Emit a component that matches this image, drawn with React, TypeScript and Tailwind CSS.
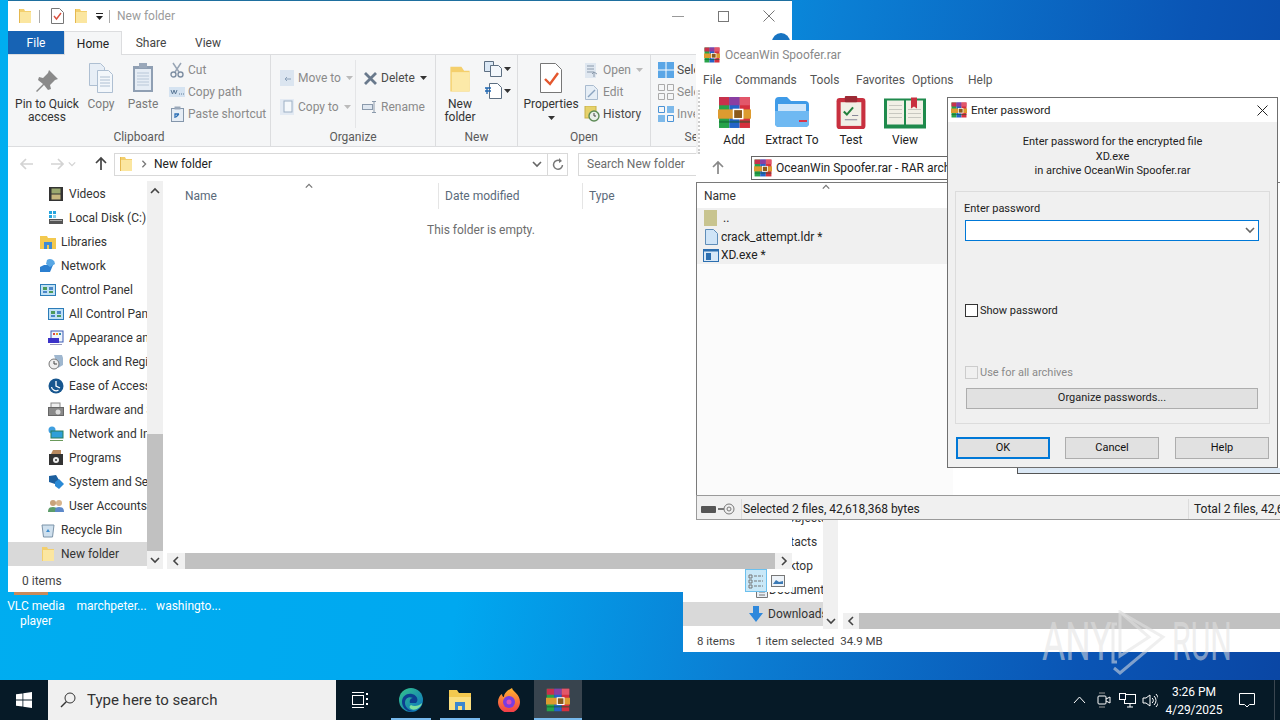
import React from "react";

type P = { s?: number; className?: string };

const Folder = ({ s = 16 }: P) => (
  <svg width={s} height={s} viewBox="0 0 16 16" className="shrink-0">
    <path d="M2 1h5l1 2h6v12H2z" fill="#f3cf6d" />
    <path d="M3 4h11v11H3z" fill="#fbe6a0" />
    <path d="M2 1h1v14H2z" fill="#e5b84f" />
  </svg>
);

const Rar = ({ s = 16 }: P) => (
  <svg width={s} height={s} viewBox="0 0 32 32" className="shrink-0">
    <rect x="1" y="1" width="10" height="30" fill="#27a34a" />
    <rect x="11" y="1" width="10" height="30" fill="#2464c8" />
    <rect x="21" y="1" width="10" height="30" fill="#d5303e" />
    <rect x="1" y="1" width="10" height="8" fill="#c9304c" />
    <rect x="11" y="1" width="10" height="8" fill="#8b3ea2" />
    <rect x="21" y="1" width="10" height="8" fill="#e2576a" />
    <rect x="1" y="24" width="30" height="2" fill="#0b5a2a" opacity=".5" />
    <rect x="0" y="13" width="32" height="9" fill="#dd9b30" />
    <rect x="15" y="13" width="9" height="9" fill="#8b5a1c" stroke="#fff" strokeWidth="1.4" />
  </svg>
);

const Chevron = ({ dir = "down", c = "#555", s = 10 }: { dir?: "down" | "up" | "left" | "right"; c?: string; s?: number }) => {
  const d = { down: "M1 3l4 4 4-4", up: "M1 7l4-4 4 4", left: "M7 1L3 5l4 4", right: "M3 1l4 4-4 4" }[dir];
  return (
    <svg width={s} height={s} viewBox="0 0 10 10" className="shrink-0">
      <path d={d} fill="none" stroke={c} strokeWidth="1.6" />
    </svg>
  );
};

const Drop = ({ c = "#333" }: { c?: string }) => (
  <svg width="7" height="4" viewBox="0 0 7 4" className="shrink-0">
    <path d="M0 0h7L3.500 4z" fill={c} />
  </svg>
);

const Arrow = ({ dir, c }: { dir: "left" | "right" | "up"; c: string }) => {
  const r = dir === "left" ? 0 : dir === "right" ? 180 : 90;
  return (
    <svg width="16" height="16" viewBox="0 0 16 16" className="shrink-0">
      <path transform={`rotate(${r} 8 8)`} d="M2 8h12M7 3L2 8l5 5" fill="none" stroke={c} strokeWidth="1.7" />
    </svg>
  );
};

const NavIcon = ({ kind }: { kind: string }) => {
  const body: Record<string, React.ReactNode> = {
    video: (<><rect x="1" y="1" width="14" height="14" fill="#333" /><rect x="3.500" y="2.500" width="9" height="5" fill="#9aa86f" /><rect x="3.500" y="8.500" width="9" height="5" fill="#c6b77e" /></>),
    disk: (<><rect x="1" y="9" width="14" height="5" fill="#555" /><rect x="2" y="10" width="12" height="1" fill="#aaa" /><rect x="1" y="1" width="3" height="3" fill="#26a6df" /><rect x="5" y="1" width="3" height="3" fill="#26a6df" /><rect x="1" y="5" width="3" height="3" fill="#26a6df" /><rect x="5" y="5" width="3" height="3" fill="#7fd0f0" /></>),
    lib: (<><path d="M0 2h7l1 2h8v11H0z" fill="#f3c94f" /><rect x="4" y="8" width="8" height="7" fill="#3e8ad6" /><rect x="7" y="11" width="2" height="4" fill="#f3c94f" /></>),
    net: (<><path d="M0 9l4-2h9l-3 7H0z" fill="#2b7fd0" /><path d="M7 2a5 5 0 0 1 8 4l-5 3-4-3z" fill="#59a7e4" /></>),
    cp: (<><rect x="0.500" y="2.500" width="15" height="11" fill="#bfe0f5" stroke="#2c7cb8" /><rect x="3" y="5" width="4" height="3" fill="#4c9a5a" /><rect x="9" y="5" width="4" height="3" fill="#4b86c7" /><rect x="3" y="9" width="4" height="2" fill="#4b86c7" /><rect x="9" y="9" width="4" height="2" fill="#4c9a5a" /></>),
    appear: (<><rect x="3" y="1" width="12" height="11" fill="#eef4fb" stroke="#3b5bb5" /><rect x="5" y="3" width="2" height="2" fill="#d44" /><rect x="8" y="3" width="2" height="2" fill="#e8a020" /><rect x="11" y="3" width="2" height="2" fill="#38a" /><rect x="0" y="8" width="11" height="5" fill="#3b32c8" /><rect x="2" y="14" width="12" height="1" fill="#99b" /></>),
    clock: (<><path d="M6 1h8l1 3v7l-5 3z" fill="#9fb7cf" /><circle cx="6" cy="10" r="5" fill="#eee" stroke="#777" /><path d="M6 7v3h3" stroke="#444" fill="none" /></>),
    ease: (<><circle cx="8" cy="8" r="7.500" fill="#17568f" /><path d="M8 3v5l4 2M3.500 9a4.500 4.500 0 0 0 7 3" stroke="#fff" strokeWidth="1.3" fill="none" /></>),
    hw: (<><rect x="3" y="1" width="9" height="5" fill="#eee" stroke="#888" /><rect x="0.500" y="5.500" width="15" height="8" fill="#8a8a8a" stroke="#666" /><circle cx="10" cy="10" r="2.500" fill="#ddd" /></>),
    netint: (<><circle cx="4" cy="4" r="3.500" fill="#3f9fe0" /><rect x="3" y="5" width="12" height="7" fill="#2f9fd8" stroke="#2a7d5a" /><rect x="2" y="14" width="13" height="1" fill="#6a9a5a" /></>),
    prog: (<><rect x="1" y="4" width="14" height="11" fill="#333" /><path d="M5 0h8v4H3z" fill="#b88a60" /><circle cx="8" cy="10" r="3" fill="#eee" /><circle cx="8" cy="10" r="1" fill="#333" /></>),
    sys: (<><path d="M1 2l7-1 3 5-4 4-6-2z" fill="#1c5f9e" /><path d="M7 8l4-3 5 5-5 5-4-3z" fill="#2a8ad6" /></>),
    user: (<><circle cx="5" cy="5" r="3" fill="#c9a27a" /><circle cx="11" cy="5" r="3" fill="#d8b48c" /><path d="M0 14c0-4 2-5 5-5s4 1 4 5z" fill="#5c9c6a" /><path d="M7 14c0-4 1-5 4-5s5 1 5 5z" fill="#5c88c9" /></>),
    bin: (<><path d="M2 3h12l-1.500 12H3.500z" fill="#cfe0ee" stroke="#7b93a8" /><path d="M6 10l2-3 2 3z" fill="#3f8ed0" /></>),
    folder: (<><path d="M2 1h5l1 2h6v12H2z" fill="#f3cf6d" /><path d="M3 4h11v11H3z" fill="#fbe6a0" /></>),
  };
  return (
    <svg width="16" height="16" viewBox="0 0 16 16" className="shrink-0">
      {body[kind]}
    </svg>
  );
};

const NavRow = ({ icon, label, indent, sel }: { icon: string; label: string; indent: number; sel?: boolean }) => (
  <div className={`h-6 flex items-center overflow-hidden whitespace-nowrap ${indent === 2 ? "pl-10" : "pl-8"} ${sel ? "bg-[#d9d9d9]" : ""}`}>
    <NavIcon kind={icon} />
    <span className="ml-[5px]">{label}</span>
  </div>
);

const SmallItem = ({ icon, label, gray, arrow }: { icon: React.ReactNode; label: string; gray?: boolean; arrow?: boolean }) => (
  <div className={`h-[22px] flex items-center gap-[2px] whitespace-nowrap ${gray ? "text-[#8a8a8a]" : "text-[#4a4a4a]"}`}>
    <span className="w-[16px] h-[16px] flex items-center justify-center shrink-0">{icon}</span>
    <span className="ml-[1px]">{label}</span>
    {arrow ? <span className="ml-[3px]"><Drop c={gray ? "#bbb" : "#333"} /></span> : null}
  </div>
);

const Big = ({ w, icon, lines, gray }: { w: number; icon: React.ReactNode; lines: string[]; gray?: boolean }) => (
  <div className={`flex flex-col items-center shrink-0 ${gray ? "text-[#7a7a7a]" : "text-[#333]"}`} style={{ width: w }}>
    <div className="h-[33px] flex items-end justify-center">{icon}</div>
    <div className="mt-[5px] leading-[13px] text-center whitespace-nowrap">
      {lines.map((l) => (<div key={l}>{l}</div>))}
    </div>
  </div>
);

const Group = ({ w, label, children, sep = true }: { w: number; label: string; children: React.ReactNode; sep?: boolean }) => (
  <div className={`h-full flex flex-col shrink-0 ${sep ? "border-r border-[#dcdddf]" : ""}`} style={{ width: w }}>
    <div className="flex-1 flex pt-[5px] min-h-0">{children}</div>
    <div className="h-[15px] pb-[2px] leading-[13px] text-center text-[#5a5a5a]">{label}</div>
  </div>
);

const Doc = ({ c = "#b9cde0", f = "#e9f0f7" }: { c?: string; f?: string }) => (
  <svg width="14" height="16" viewBox="0 0 14 16">
    <path d="M1.500 .5h7l4 4v11h-11z" fill={f} stroke={c} />
    <path d="M4 7h6M4 10h6M4 13h6" stroke={c} />
  </svg>
);

const Explorer = () => (
  <div className="absolute left-2 top-0 w-[784px] h-[592px] bg-white border-t border-[#1e6f9f] flex flex-col text-[#333]">
    {/* title */}
    <div className="h-[30px] shrink-0 flex items-center pl-[9px] relative">
      <Folder s={16} />
      <div className="w-px h-[13px] bg-[#aaa] ml-[6px]" />
      <span className="ml-[9px] w-[16px] h-[16px] flex items-center justify-center">
        <svg width="13" height="16" viewBox="0 0 13 16"><path d="M.5.5h8l4 4v11H.5z" fill="#fff" stroke="#777" /><path d="M3 8l2.500 3L10 5" stroke="#d9503f" strokeWidth="1.400" fill="none" /></svg>
      </span>
      <span className="ml-[8px]"><Folder s={16} /></span>
      <span className="ml-[6px] flex flex-col items-center gap-[2px] w-[8px]"><span className="w-[7px] h-px bg-[#222]" /><Drop c="#222" /></span>
      <div className="w-px h-[13px] bg-[#aaa] ml-[6px]" />
      <span className="ml-[7px] text-[#9b9b9b]">New folder</span>
      <div className="ml-auto flex items-center pr-[17px]">
        <span className="w-[12px] h-px bg-[#999]" />
        <span className="ml-[34px] w-[11px] h-[11px] border border-[#777]" />
        <svg className="ml-[34px]" width="12" height="12" viewBox="0 0 12 12"><path d="M.5.5l11 11M11.500.5l-11 11" stroke="#777" /></svg>
      </div>
    </div>
    {/* tabs */}
    <div className="h-[24px] shrink-0 flex items-stretch border-b border-[#dcdddf]">
      <div className="w-[56px] bg-[#1763b4] text-white flex items-center justify-center">File</div>
      <div className="w-[58px] bg-[#f5f6f7] border-x border-t border-[#dcdddf] -mb-px flex items-center justify-center text-[#222]">Home</div>
      <div className="w-[58px] flex items-center justify-center text-[#444]">Share</div>
      <div className="w-[56px] flex items-center justify-center text-[#444]">View</div>
    </div>
    {/* ribbon */}
    <div className="h-[92px] shrink-0 bg-[#f5f6f7] border-b border-[#dcdddf] flex overflow-hidden">
      <Group w={263} label="Clipboard">
        <div className="flex pl-[8px]">
          <Big w={62} lines={["Pin to Quick", "access"]} icon={<svg width="24" height="24" viewBox="0 0 24 24"><path d="M14 1l9 9-3 1-5 5 1 4-3 1-4-5-7 7-1-1 7-7-5-4 1-3 4 1 5-5z" fill="#8a8a8a" /></svg>} />
          <Big w={46} gray lines={["Copy"]} icon={<svg width="26" height="30" viewBox="0 0 26 30"><path d="M1.500.5h11l4 4v18h-15z" fill="#e7eef6" stroke="#aebfd2" /><path d="M9.500 7.500h11l4 4v18h-15z" fill="#f3f7fb" stroke="#aebfd2" /><path d="M12 14h10M12 17h10M12 20h10M12 23h10" stroke="#aebfd2" /></svg>} />
          <Big w={38} gray lines={["Paste"]} icon={<svg width="22" height="31" viewBox="0 0 22 31"><rect x="1" y="4" width="20" height="26" fill="#8f9fb3" /><rect x="3" y="7" width="16" height="21" fill="#e6edf5" /><path d="M5 11h12M5 14h12M5 17h12M5 20h12M5 23h12" stroke="#b8c7d8" /><rect x="7" y="1" width="8" height="5" fill="#9aa8ba" /></svg>} />
        </div>
        <div className="flex flex-col ml-[7px] -mt-[1px]">
          <SmallItem gray label="Cut" icon={<svg width="14" height="16" viewBox="0 0 14 16"><path d="M3 1l6 9M11 1L5 10" stroke="#98a5b5" strokeWidth="1.500" /><circle cx="3.500" cy="12.500" r="2.500" fill="none" stroke="#7e8fa3" strokeWidth="1.400" /><circle cx="10.500" cy="12.500" r="2.500" fill="none" stroke="#7e8fa3" strokeWidth="1.400" /></svg>} />
          <SmallItem gray label="Copy path" icon={<svg width="16" height="10" viewBox="0 0 16 10"><rect width="16" height="10" fill="#d5e3f1" /><path d="M2 3l1.500 4L5 3l1.500 4L8 3" stroke="#5d7a98" fill="none" /><path d="M10 7h5" stroke="#5d7a98" strokeDasharray="1 1" /></svg>} />
          <SmallItem gray label="Paste shortcut" icon={<svg width="13" height="16" viewBox="0 0 13 16"><rect x=".5" y="2.500" width="12" height="13" fill="#e6edf5" stroke="#8496ab" /><rect x="3.500" y=".5" width="6" height="3" fill="#9aa8ba" /><path d="M4 12V8h4M8 8L5 11" stroke="#2c6fb5" strokeWidth="1.300" fill="none" /></svg>} />
        </div>
      </Group>
      <Group w={165} label="Organize">
        <div className="flex flex-col w-[85px] pl-[8px] pt-[7px] gap-[7px] border-r border-[#e4e5e7] mb-[3px]">
          <SmallItem gray arrow label="Move to" icon={<svg width="14" height="16" viewBox="0 0 14 16"><rect width="14" height="16" fill="#dbe5f0" /><path d="M11 9H5M7 7L5 9l2 2" stroke="#8aa0b8" fill="none" /></svg>} />
          <SmallItem gray arrow label="Copy to" icon={<svg width="14" height="16" viewBox="0 0 14 16"><rect width="14" height="16" fill="#e3eaf3" /><rect x="4" y="2" width="8" height="11" fill="#f5f8fb" stroke="#9db0c5" /></svg>} />
        </div>
        <div className="flex flex-col pl-[6px] pt-[7px] gap-[7px]">
          <SmallItem label="Delete" icon={<svg width="13" height="13" viewBox="0 0 13 13"><path d="M1 1l11 11M12 1L1 12" stroke="#69798c" strokeWidth="2.800" /></svg>} arrow />
          <SmallItem gray label="Rename" icon={<svg width="16" height="12" viewBox="0 0 16 12"><rect x=".5" y="3.500" width="10" height="5" fill="#dfe7f0" stroke="#8b9aac" /><path d="M12 0v12M10 .5h4M10 11.500h4" stroke="#8b9aac" /></svg>} />
        </div>
      </Group>
      <Group w={82} label="New">
        <div className="pl-[3px]">
          <Big w={42} lines={["New", "folder"]} icon={<svg width="22" height="28" viewBox="0 0 16 20"><path d="M1 1h8l2 3h4v15H1z" fill="#f4cf6c" /><path d="M2 5h13v14H2z" fill="#fce9a8" /></svg>} />
        </div>
        <div className="flex flex-col gap-[6px] ml-[3px] pt-[1px]">
          <div className="flex items-center gap-[2px]">
            <svg width="18" height="16" viewBox="0 0 18 16"><path d="M.5.5h9v10h-9z" fill="#dbe8f5" stroke="#5d6f82" /><path d="M6.500 4.500h8l3 3v8h-11z" fill="#f3f7fb" stroke="#5d6f82" /></svg>
            <Drop />
          </div>
          <div className="flex items-center gap-[2px]">
            <svg width="18" height="16" viewBox="0 0 18 16"><path d="M5.500.5h8l4 4v11h-12z" fill="#fff" stroke="#5d6f82" /><path d="M1 5h6M1 8h6M3 5v6" stroke="#1e66b0" strokeWidth="1.300" /></svg>
            <Drop />
          </div>
        </div>
      </Group>
      <Group w={133} label="Open">
        <div className="flex flex-col items-center w-[64px] text-[#333] ml-[1px]">
          <div className="h-[33px] flex items-end">
            <svg width="22" height="30" viewBox="0 0 22 30"><path d="M.5.5h15l6 6v23H.5z" fill="#fff" stroke="#777" /><path d="M5 16l5 5 8-11" fill="none" stroke="#e4572e" strokeWidth="2.400" /></svg>
          </div>
          <div className="mt-[5px] leading-[13px]">Properties</div>
          <div className="mt-[5px]"><Drop /></div>
        </div>
        <div className="flex flex-col ml-[1px] -mt-[1px]">
          <SmallItem gray arrow label="Open" icon={<svg width="14" height="15" viewBox="0 0 14 15"><rect width="11" height="15" fill="#dfe7f0" /><path d="M2 3h7M2 6h7M2 9h7" stroke="#8b9aac" /><path d="M9 14V9l-2 2M9 9l3 2" stroke="#8b9aac" fill="none" /></svg>} />
          <SmallItem gray label="Edit" icon={<svg width="14" height="15" viewBox="0 0 14 15"><path d="M.5.5h8l4 4v10H.5z" fill="#e6eef6" stroke="#a9bbcf" /><path d="M3 12L10 5" stroke="#8ba4c0" strokeWidth="1.500" /></svg>} />
          <SmallItem label="History" icon={<svg width="16" height="16" viewBox="0 0 16 16"><rect x="1" width="11" height="12" fill="#e6d26a" stroke="#c8b04a" /><circle cx="10" cy="10" r="5" fill="#e9efe9" stroke="#5c8a55" strokeWidth="1.400" /><path d="M10 7v3h2" stroke="#444" fill="none" /></svg>} />
        </div>
      </Group>
      <Group w={100} label="Select" sep={false}>
        <div className="flex flex-col pl-[7px] -mt-[1px] w-[44px] overflow-hidden">
          <SmallItem label="Select all" icon={<svg width="16" height="16" viewBox="0 0 16 16"><rect width="16" height="16" fill="#5aa6e6" /><path d="M8 0v16M0 8h16" stroke="#fff" /></svg>} />
          <SmallItem gray label="Select none" icon={<svg width="16" height="16" viewBox="0 0 16 16"><path d="M.5.5h6v6h-6zM9.500.5h6v6h-6zM.5 9.500h6v6h-6zM9.500 9.500h6v6h-6z" fill="none" stroke="#aaa" /></svg>} />
          <SmallItem gray label="Invert selection" icon={<svg width="16" height="16" viewBox="0 0 16 16"><path d="M.5.5h6v6h-6z" fill="none" stroke="#4a93d6" /><path d="M9 0h7v7H9zM0 9h7v7H0z" fill="#7db9ea" /><path d="M9.500 9.500h6v6h-6z" fill="none" stroke="#4a93d6" /></svg>} />
        </div>
      </Group>
    </div>
    {/* address */}
    <div className="h-[34px] shrink-0 flex items-center">
      <span className="ml-[11px]"><Arrow dir="left" c="#d3d3d3" /></span>
      <span className="ml-[14px]"><Arrow dir="right" c="#d3d3d3" /></span>
      <span className="ml-[3px]"><Chevron c="#d3d3d3" s={8} /></span>
      <span className="ml-[17px]"><Arrow dir="up" c="#444" /></span>
      <div className="ml-[5px] w-[454px] h-[23px] border border-[#d9d9d9] flex items-center">
        <span className="ml-[3px]"><Folder s={16} /></span>
        <span className="ml-[6px]"><Chevron dir="right" c="#777" s={8} /></span>
        <span className="ml-[6px] text-[#222]">New folder</span>
        <span className="ml-auto w-[20px] h-full flex items-center justify-center"><Chevron c="#666" /></span>
        <span className="w-[20px] h-full border-l border-[#d9d9d9] flex items-center justify-center">
          <svg width="12" height="13" viewBox="0 0 12 13"><path d="M10.500 7a4.500 4.500 0 1 1-2-4" fill="none" stroke="#777" strokeWidth="1.500" /><path d="M7 0l3 3-3 2z" fill="#777" /></svg>
        </span>
      </div>
      <div className="ml-[10px] flex-1 h-[23px] border border-[#d9d9d9] flex items-center pl-[8px] text-[#6d6d6d]">Search New folder</div>
    </div>
    {/* body */}
    <div className="flex-1 min-h-0 flex">
      <div className="w-[139px] pt-[1px] shrink-0 flex flex-col">
        <NavRow indent={2} icon="video" label="Videos" />
        <NavRow indent={2} icon="disk" label="Local Disk (C:)" />
        <NavRow indent={1} icon="lib" label="Libraries" />
        <NavRow indent={1} icon="net" label="Network" />
        <NavRow indent={1} icon="cp" label="Control Panel" />
        <NavRow indent={2} icon="cp" label="All Control Panel Items" />
        <NavRow indent={2} icon="appear" label="Appearance and Personalization" />
        <NavRow indent={2} icon="clock" label="Clock and Region" />
        <NavRow indent={2} icon="ease" label="Ease of Access" />
        <NavRow indent={2} icon="hw" label="Hardware and Sound" />
        <NavRow indent={2} icon="netint" label="Network and Internet" />
        <NavRow indent={2} icon="prog" label="Programs" />
        <NavRow indent={2} icon="sys" label="System and Security" />
        <NavRow indent={2} icon="user" label="User Accounts" />
        <NavRow indent={1} icon="bin" label="Recycle Bin" />
        <NavRow indent={1} icon="folder" label="New folder" sel />
      </div>
      <div className="w-[16px] shrink-0 bg-[#f0f0f0] flex flex-col items-center">
        <div className="h-[20px] flex items-center justify-center"><Chevron dir="up" c="#444" /></div>
        <div className="flex-1" />
        <div className="w-full h-[117px] bg-[#c1c1c1]" />
        <div className="h-[18px] flex items-center justify-center"><Chevron c="#444" /></div>
      </div>
      <div className="flex-1 min-w-0 flex flex-col relative">
        <div className="h-[28px] shrink-0 flex items-end text-[#5a6a7a]">
          <div className="w-[276px] h-[26px] pl-[22px] border-r border-[#e5e5e5] flex items-center relative">Name
            <span className="absolute left-[142px] -top-[1px]"><Chevron dir="up" c="#777" s={8} /></span>
          </div>
          <div className="w-[144px] h-[26px] pl-[6px] border-r border-[#e5e5e5] flex items-center">Date modified</div>
          <div className="pl-[6px] h-[26px] flex items-center">Type</div>
        </div>
        <div className="pt-[13px] pl-[264px] text-[#6d6d6d]">This folder is empty.</div>
        <div className="mt-auto h-[16px] ml-[4px] bg-[#f0f0f0] flex items-center">
          <div className="w-[18px] h-full flex items-center justify-center"><Chevron dir="left" c="#444" /></div>
          <div className="flex-1 h-full bg-[#c1c1c1]" />
          <div className="w-[17px] h-full flex items-center justify-center"><Chevron dir="right" c="#444" /></div>
        </div>
      </div>
    </div>
    {/* status */}
    <div className="h-[23px] shrink-0 flex items-center pl-[14px] text-[#444]">
      0 items
      <div className="ml-auto flex items-center pr-[7px] gap-[2px]">
        <div className="w-[22px] h-[23px] bg-[#c9e8f8] border border-[#6cc0ee] flex items-center justify-center">
          <svg width="16" height="16" viewBox="0 0 16 16"><path d="M1 2h3v3H1zM1 7h3v3H1zM1 12h3v3H1z" fill="none" stroke="#777" /><path d="M6 3h9M6 8h9M6 13h9" stroke="#777" strokeDasharray="3 1" /></svg>
        </div>
        <svg className="ml-[2px]" width="14" height="12" viewBox="0 0 14 12"><rect x=".5" y=".5" width="13" height="11" fill="#eef3f8" stroke="#777" /><path d="M2 9l3-4 3 2 4-1v3H2z" fill="#3c7ab5" /></svg>
      </div>
    </div>
  </div>
);

const ExplorerBack = () => (
  <div className="absolute left-[683px] top-[40px] right-0 h-[612px] bg-white flex flex-col justify-end text-[#333]">
    <div className="flex">
      <div className="w-[140px] flex flex-col">
        {["3D Objects", "Contacts", "Desktop", "Documents"].map((l) => (
          <div key={l} className="h-6 flex items-center pl-[72px] whitespace-nowrap overflow-hidden">
            <span className="w-[14px] shrink-0 flex">{l === "Documents" ? <Doc c="#777" /> : null}</span>
            <span>{l}</span>
          </div>
        ))}
        <div className="h-6 bg-[#d9d9d9] flex items-center pl-[65px] whitespace-nowrap overflow-hidden">
          <svg width="16" height="16" viewBox="0 0 16 16" className="shrink-0"><path d="M5 0h6v7h4l-7 9-7-9h4z" fill="#2e88dc" /></svg>
          <span className="ml-[4px]">Downloads</span>
        </div>
        <div className="h-[3px]" />
      </div>
      <div className="w-[15px] bg-[#f0f0f0] flex flex-col justify-end items-center pb-[3px]"><Chevron c="#444" /></div>
      <div className="flex-1 flex flex-col justify-end pl-[5px]">
        <div className="h-[16px] bg-[#f0f0f0] flex items-center">
          <div className="w-[16px] flex justify-center"><Chevron dir="left" c="#444" /></div>
          <div className="flex-1 h-full bg-[#c1c1c1]" />
        </div>
      </div>
    </div>
    <div className="h-[23px] pt-[1px] flex items-center pl-[14px] text-[#444] text-[11.5px]">
      <span>8 items</span>
      <span className="ml-[21px]">1 item selected</span>
      <span className="ml-[6px]">34.9 MB</span>
    </div>
  </div>
);

const ToolBtn = ({ w, label, icon }: { w: number; label: string; icon: React.ReactNode }) => (
  <div className="flex flex-col items-center shrink-0 text-[#222]" style={{ width: w }}>
    <div className="h-[36px] flex items-end justify-center">{icon}</div>
    <div className="mt-[3px] leading-[16px] whitespace-nowrap">{label}</div>
  </div>
);

const WinRar = () => (
  <div className="absolute left-[696px] top-[40px] right-0 h-[480px] bg-[#f0f0f0] flex flex-col text-[#222]">
    <div className="h-[30px] shrink-0 bg-white flex items-center pl-[8px] text-[#888]">
      <Rar s={16} />
      <span className="ml-[5px]">OceanWin Spoofer.rar</span>
    </div>
    <div className="h-[20px] shrink-0 bg-white flex items-center pl-[7px] text-[#555]">
      <span className="w-[32px]">File</span>
      <span className="w-[75px]">Commands</span>
      <span className="w-[46px]">Tools</span>
      <span className="w-[56px]">Favorites</span>
      <span className="w-[56px]">Options</span>
      <span>Help</span>
    </div>
    <div className="h-[64px] shrink-0 bg-white border-l-2 border-dotted border-[#ccc] ml-[2px] flex pl-[16px] pt-[3px]">
      <ToolBtn w={36} label="Add" icon={<Rar s={33} />} />
      <ToolBtn w={80} label="Extract To" icon={<svg width="38" height="34" viewBox="0 0 38 34"><path d="M2 6a4 4 0 0 1 4-4h8l4 4h14a4 4 0 0 1 4 4v18a4 4 0 0 1-4 4H6a4 4 0 0 1-4-4z" fill="#3f9be8" /><path d="M5 9h28v8H5z" fill="#cfe6fa" /><path d="M2 16h34v12a4 4 0 0 1-4 4H6a4 4 0 0 1-4-4z" fill="#6fb9f2" /><rect x="26" y="25" width="8" height="2" fill="#d8354b" /></svg>} />
      <ToolBtn w={38} label="Test" icon={<svg width="30" height="33" viewBox="0 0 28 32"><rect x="0" y="2" width="28" height="30" rx="3" fill="#c8303f" /><rect x="4" y="6" width="20" height="23" fill="#f1efe6" /><rect x="8" y="0" width="12" height="6" rx="1" fill="#9c2a35" /><path d="M7 15l3 3 6-7" stroke="#23803e" strokeWidth="2" fill="none" /><path d="M8 23h12M15 19h6" stroke="#889" /></svg>} />
      <ToolBtn w={70} label="View" icon={<svg width="42" height="32" viewBox="0 0 42 31"><path d="M0 1h42v30H0z" fill="#1f8a4c" /><path d="M3 3h17v24H3zM22 3h17v24H22z" fill="#f2f0e6" /><path d="M5 8h13M5 12h13M5 16h13M5 20h13M24 12h13M24 16h13M24 20h13" stroke="#c8c8c0" /><path d="M27 0h6v11l-3-2-3 2z" fill="#c8303f" /></svg>} />
    </div>
    <div className="h-[28px] shrink-0 bg-white flex items-center pl-[14px] relative">
      <Arrow dir="up" c="#888" />
      <div className="ml-[25px] w-[196px] h-[24px] border border-r-0 border-[#666] flex items-center pl-[2px] text-[#222] whitespace-nowrap overflow-hidden">
        <Rar s={18} />
        <span className="ml-[4px]">OceanWin Spoofer.rar - RAR archive</span>
      </div>
    </div>
    <div className="flex-1 min-h-0 bg-white border-t border-l border-[#7a7a7a] flex flex-col relative">
      <div className="h-[25px] shrink-0 pl-[7px] pt-[5px] text-[#333] relative">Name
        <span className="absolute left-[125px] top-0"><Chevron dir="up" c="#777" s={8} /></span>
      </div>
      <div className="w-[256px] flex-1 bg-[#fbfbfb]">
        <div className="bg-[#f0f0f0] h-[56px]">
          <div className="h-[19px] flex items-center pl-[7px]"><svg width="13" height="16" viewBox="0 0 13 16"><rect width="13" height="16" fill="#c8c48f" /></svg><span className="ml-[6px]">..</span></div>
          <div className="h-[19px] flex items-center pl-[8px]"><svg width="13" height="16" viewBox="0 0 13 16"><path d="M.5.5h8l4 4v11H.5z" fill="#cfe4f7" stroke="#5f8db8" /></svg><span className="ml-[3px]">crack_attempt.ldr *</span></div>
          <div className="h-[18px] flex items-center pl-[6px]"><svg width="16" height="13" viewBox="0 0 16 13"><rect x=".5" y=".5" width="15" height="12" fill="#d8e8f7" stroke="#2c6fb0" /><rect x=".5" y=".5" width="15" height="2" fill="#2c6fb0" /><rect x="3" y="4" width="5" height="7" fill="#2c6fb0" /></svg><span className="ml-[2px]">XD.exe *</span></div>
        </div>
      </div>
      <div className="absolute left-[320px] right-0 bottom-[21px] h-[6px] bg-[#dbe8f5] border-b border-l border-[#555]" />
    </div>
    <div className="h-[25px] pt-[3px] shrink-0 border-t border-l border-b border-[#9a9a9a] flex items-center text-[#222]">
      <div className="w-[45px] shrink-0 h-full flex items-center pl-[4px] gap-[2px] border-r border-[#dcdcdc]">
        <span className="w-[15px] h-[7px] bg-[#555] rounded-[1px]" />
        <svg width="17" height="12" viewBox="0 0 17 12"><circle cx="11" cy="6" r="5" fill="#eee" stroke="#777" /><circle cx="11" cy="6" r="2" fill="none" stroke="#777" /><path d="M0 6h6" stroke="#777" strokeWidth="2" /></svg>
      </div>
      <span className="pl-[1px] w-[446px] shrink-0">Selected 2 files, 42,618,368 bytes</span>
      <span className="pl-[5px] h-full flex items-center border-l border-[#dcdcdc] whitespace-nowrap">Total 2 files, 42,618,368 bytes</span>
    </div>
  </div>
);

const WinBtn = ({ label, w, primary }: { label: string; w: number; primary?: boolean }) => (
  <div className={`h-[22px] shrink-0 bg-[#e1e1e1] flex items-center justify-center text-[#111] ${primary ? "border-2 border-[#0078d7]" : "border border-[#adadad]"}`} style={{ width: w }}>
    {label}
  </div>
);

const Check = ({ label, disabled }: { label: string; disabled?: boolean }) => (
  <div className={`flex items-center ml-[9px] gap-[2px] ${disabled ? "text-[#8a8a8a]" : "text-[#222]"}`}>
    <span className={`w-[13px] h-[13px] border ${disabled ? "border-[#ccc]" : "border-[#333] bg-white"}`} />
    <span>{label}</span>
  </div>
);

const Dialog = () => (
  <div className="absolute left-[947px] top-[97px] w-[331px] h-[371px] bg-[#f0f0f0] border border-[#6f6f6f] flex flex-col text-[#222] text-[11px]">
    <div className="h-[24px] shrink-0 bg-white flex items-center pl-[3px] pr-[9px] text-[11.5px]">
      <Rar s={16} />
      <span className="ml-[4px]">Enter password</span>
      <svg className="ml-auto" width="11" height="11" viewBox="0 0 11 11"><path d="M.5.5l10 10M10.500.5l-10 10" stroke="#222" /></svg>
    </div>
    <div className="pt-[13px] text-center leading-[14.500px]">
      <div>Enter password for the encrypted file</div>
      <div>XD.exe</div>
      <div>in archive OceanWin Spoofer.rar</div>
    </div>
    <div className="mt-[12px] mx-[7px] w-[315px] h-[233px] border border-[#dcdcdc] flex flex-col">
      <div className="mt-[9px] ml-[8px] leading-[16px]">Enter password</div>
      <div className="mt-[3px] ml-[9px] w-[294px] h-[21px] bg-white border border-[#0078d7] flex items-center justify-end pr-[3px]"><Chevron c="#666" /></div>
      <div className="mt-[62px]"><Check label="Show password" /></div>
      <div className="mt-[46px]"><Check label="Use for all archives" disabled /></div>
      <div className="mt-[7px] ml-[10px] h-[21px] w-[292px] bg-[#e1e1e1] border border-[#adadad] flex items-center justify-center">Organize passwords...</div>
    </div>
    <div className="mt-[13px] flex pl-[8px]">
      <WinBtn label="OK" w={94} primary />
      <div className="w-[15px]" />
      <WinBtn label="Cancel" w={94} />
      <div className="w-[16px]" />
      <WinBtn label="Help" w={94} />
    </div>
  </div>
);

const Tray = () => (
  <div className="ml-auto flex items-center h-full text-white">
    <svg width="13" height="8" viewBox="0 0 13 8"><path d="M1 7l5.500-6L12 7" fill="none" stroke="#fff" /></svg>
    <svg className="ml-[11px]" width="14" height="16" viewBox="0 0 14 16"><rect x="1" y="4" width="8" height="8" rx="1" fill="none" stroke="#fff" /><path d="M9 7l4-2v6l-4-2" fill="none" stroke="#fff" /><path d="M2 1h6M2 15h6" stroke="#999" /></svg>
    <svg className="ml-[8px]" width="17" height="15" viewBox="0 0 17 15"><rect x="5.500" y="1.500" width="11" height="9" fill="none" stroke="#fff" /><rect x=".5" y=".5" width="6" height="6" fill="#05172a" stroke="#fff" /><path d="M11 11v3M8 14h6" stroke="#fff" /></svg>
    <svg className="ml-[6px]" width="16" height="15" viewBox="0 0 16 15"><path d="M1 5h3l4-3v11L4 10H1z" fill="none" stroke="#fff" /><path d="M10 5a3 3 0 0 1 0 5M12 3a6 6 0 0 1 0 9M14 1a9 9 0 0 1 0 13" fill="none" stroke="#fff" /></svg>
    <div className="w-[60px] ml-[6px] pt-[2px] text-center leading-[18px] text-[12px]">
      <div>3:26 PM</div>
      <div>4/29/2025</div>
    </div>
    <svg className="ml-[15px]" width="16" height="15" viewBox="0 0 16 15"><path d="M.5.5h15v11h-5L8 14l-2.500-2.500h-5z" fill="none" stroke="#fff" /></svg>
    <div className="w-[20px] h-full border-r border-[#3a4650]" />
    <div className="w-[5px]" />
  </div>
);

const Taskbar = () => (
  <div className="absolute left-0 right-0 bottom-0 h-[40px] bg-[#061a27] flex items-stretch">
    <div className="w-[48px] flex items-center justify-center">
      <svg width="16" height="16" viewBox="0 0 16 16"><path d="M0 2.300l6.500-.9v6.200H0zM7.300 1.300L16 0v7.600H7.300zM0 8.400h6.500v6.200L0 13.700zM7.300 8.400H16V16l-8.700-1.200z" fill="#fff" /></svg>
    </div>
    <div className="w-[288px] bg-[#f0f0f0] flex items-center pl-[12px] text-[#333] text-[15px]">
      <svg width="16" height="16" viewBox="0 0 16 16"><circle cx="10" cy="6" r="5" fill="none" stroke="#333" /><path d="M6.500 9.500L1 15" stroke="#333" strokeWidth="1.500" /></svg>
      <span className="ml-[11px]">Type here to search</span>
    </div>
    <div className="w-[48px] flex items-center justify-center">
      <svg width="16" height="16" viewBox="0 0 16 16"><path d="M0 .5h12M0 15.500h12" stroke="#fff" /><rect x=".5" y="3.500" width="11" height="9" fill="none" stroke="#fff" /><path d="M14 1h2v2h-2zM14 6h2v2h-2zM14 11h2v2h-2z" fill="#fff" /></svg>
    </div>
    <div className="w-[49px] ml-[2px] relative flex items-center justify-center">
      <svg width="24" height="24" viewBox="0 0 24 24"><defs><linearGradient id="e1" x1="0" y1="0" x2="1" y2="1"><stop offset="0" stopColor="#35c58a" /><stop offset="1" stopColor="#0a6fc2" /></linearGradient></defs><circle cx="12" cy="12" r="12" fill="url(#e1)" /><path d="M3 14C3 8 8 5 13 6s7 6 4 9h-6c-1-3 1-5 3-5C10 8 6 10 6 15c0 4 4 8 9 8-6 2-12-3-12-9z" fill="#0d3f8f" /><path d="M12 17c3 2 8 1 11-2-1 5-7 8-11 6-2-1-2-3 0-4z" fill="#7ee0a0" /></svg>
      <span className="absolute bottom-0 left-[5px] right-[4px] h-[2px] bg-[#76b9ed]" />
    </div>
    <div className="w-[49px] relative flex items-center justify-center">
      <svg width="24" height="22" viewBox="0 0 24 22"><path d="M1 1h8l2 3h12v17H1z" fill="#f3c94f" /><rect x="1" y="8" width="22" height="13" fill="#fbdf80" /><path d="M7 13h10v8h-3v-4h-4v4H7z" fill="#3b86cf" /></svg>
      <span className="absolute bottom-0 left-[5px] right-[4px] h-[2px] bg-[#76b9ed]" />
    </div>
    <div className="w-[50px] flex items-center justify-center">
      <svg width="24" height="24" viewBox="0 0 24 24"><defs><linearGradient id="f1" x1="0" y1="0" x2="0" y2="1"><stop offset="0" stopColor="#ffb52e" /><stop offset="1" stopColor="#f2384a" /></linearGradient></defs><path d="M15 0c1 4 8 6 8 14a11 11 0 1 1-22 0c0-4 2-7 4-8 0 2 1 3 2 3 0-4 4-7 8-9z" fill="url(#f1)" /><circle cx="12" cy="14" r="6" fill="#7a3ce0" /><circle cx="12" cy="14" r="2.500" fill="#e04fb0" /></svg>
    </div>
    <div className="w-[48px] bg-[#38444e] relative flex items-center justify-center">
      <Rar s={24} />
      <span className="absolute bottom-0 left-0 right-0 h-[2px] bg-[#76b9ed]" />
    </div>
    <Tray />
  </div>
);

export default function App() {
  return (
    <div className="relative w-[1280px] h-[720px] overflow-hidden text-[12px] leading-[16px] font-['Roboto','Noto_Sans',sans-serif] bg-[linear-gradient(100deg,#00aef0_0%,#00a8f0_40%,#0b7fd4_60%,#0a55b5_85%,#0a46a4_100%)]">
      <div className="absolute left-[14px] top-[592px] w-[34px] h-[3px] bg-[#c98a5a]" />
      <div className="absolute left-0 top-[599px] flex text-white leading-[15px] text-center">
        <div className="w-[72px]">VLC media<br />player</div>
        <div className="w-[79px]">marchpeter...</div>
        <div className="w-[75px]">washingto...</div>
      </div>
      <ExplorerBack />
      <Explorer />
      <span className="absolute left-[772px] top-[33px] w-[18px] h-[18px] rounded-full bg-[#1874c2]" />
      <WinRar />
      <Dialog />
      <div className="absolute left-[1040px] top-[610px] w-[195px] h-[66px] text-[rgba(225,225,225,0.55)] font-['Roboto',sans-serif] text-[54px] leading-[60px] pointer-events-none">
        <span className="absolute left-[2px] top-[2px] origin-left scale-x-[.66] whitespace-nowrap">ANY</span>
        <svg className="absolute left-[65px] top-0" width="62" height="66" viewBox="0 0 62 66" fill="none" stroke="rgba(225,225,225,0.55)" strokeWidth="3"><path d="M12 14H8v38h4" /><path d="M15 2v44l29-19z" /><path d="M15 2l43 25-43 36-6-5" /></svg>
        <span className="absolute left-[132px] top-[2px] origin-left scale-x-[.56] whitespace-nowrap">RUN</span>
      </div>
      <Taskbar />
    </div>
  );
}
